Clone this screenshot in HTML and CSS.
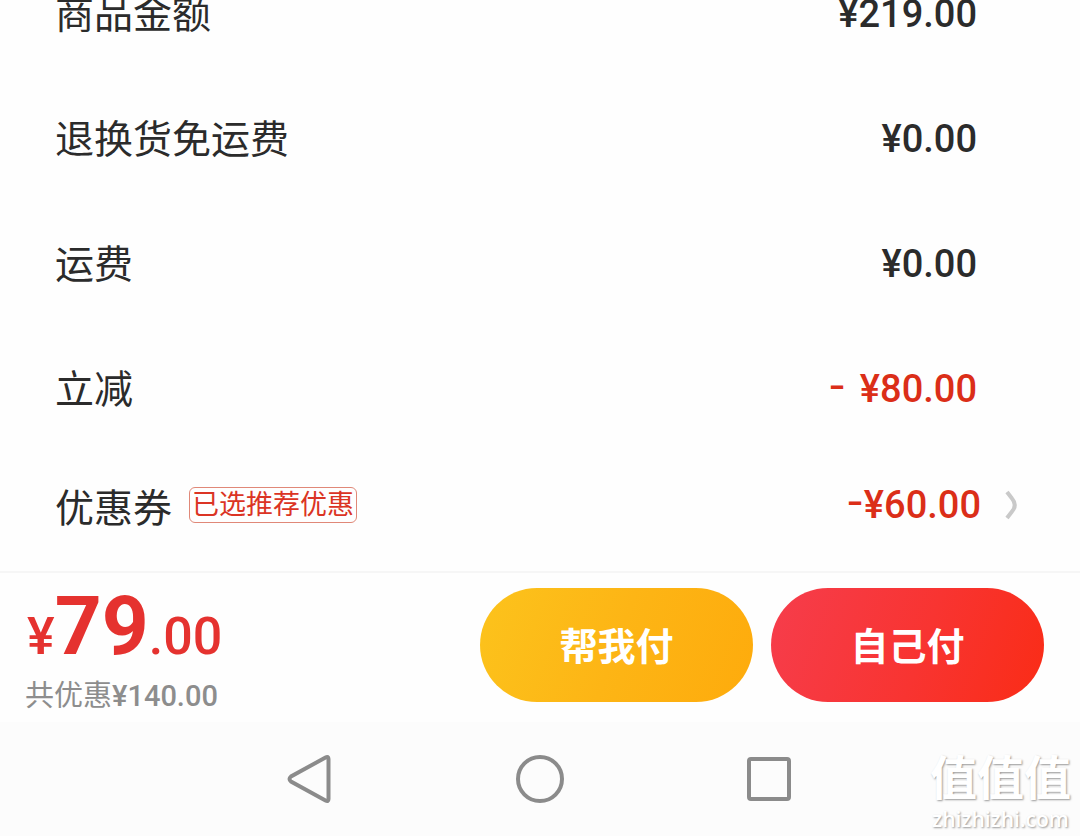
FILE: index.html
```html
<!DOCTYPE html>
<html lang="zh-CN">
<head>
<meta charset="utf-8">
<meta name="viewport" content="width=device-width, initial-scale=1">
<title>确认订单</title>
<link rel="stylesheet" href="styles.css">
</head>
<body>
<div class="page">
  <dl class="summary">
    <div class="row"><dt class="label">商品金额</dt><dd class="amount">¥219.00</dd></div>
    <div class="row"><dt class="label">退换货免运费</dt><dd class="amount">¥0.00</dd></div>
    <div class="row"><dt class="label">运费</dt><dd class="amount">¥0.00</dd></div>
    <div class="row"><dt class="label">立减</dt><dd class="amount discount"><span class="sign spaced">-</span>¥80.00</dd></div>
    <div class="row coupon">
      <dt class="label">优惠券<span class="tag">已选推荐优惠</span></dt>
      <dd class="amount discount"><span class="sign">-</span>¥60.00<svg class="chevron" viewBox="0 0 14 30" aria-hidden="true"><path d="M2 2 L7 8.500 Q12.500 15 7 21.500 L2 28"/></svg></dd>
    </div>
  </dl>
  <footer class="checkout">
    <div class="total">
      <p class="price">¥<strong class="price-main">79</strong>.00</p>
      <p class="saved">共优惠<span class="saved-amount">¥140.00</span></p>
    </div>
    <div class="actions">
      <button class="pay pay-friend" type="button">帮我付</button>
      <button class="pay pay-self" type="button">自己付</button>
    </div>
  </footer>
  <nav class="system-nav" aria-label="系统导航">
    <button class="nav-button" type="button" aria-label="返回"><svg class="nav-icon" viewBox="0 0 54 54"><path d="M41.500 5.500 Q44.500 4 44.500 7 V47 Q44.500 50 41.500 48.500 L7 29.500 Q4 27 7 24.500 Z"/></svg></button>
    <button class="nav-button" type="button" aria-label="主页"><svg class="nav-icon" viewBox="0 0 54 54"><circle cx="27" cy="27" r="22"/></svg></button>
    <button class="nav-button" type="button" aria-label="最近任务"><svg class="nav-icon" viewBox="0 0 54 54"><rect x="7" y="7" width="40" height="40" rx="2"/></svg></button>
  </nav>
  <div class="watermark"><span class="watermark-name">值值值</span><span class="watermark-site">zhizhizhi.com</span></div>
</div>
</body>
</html>
```
FILE: styles.css
```css
* { box-sizing: border-box; }

body {
  margin: 0;
  background: #fefefe;
  color: #2b2b2b;
  font-family: Roboto, "Noto Sans CJK SC", sans-serif;
}

.page {
  position: relative;
  min-height: 100vh;
  display: flex;
  flex-direction: column;
  overflow: hidden;
}

.summary {
  margin: -49px 0 0;
  padding: 0 103px 0 55px;
}

.row {
  display: flex;
  align-items: center;
  justify-content: space-between;
  height: 125px;
}

.label {
  display: flex;
  align-items: center;
  padding-bottom: 6px;
  font-family: "Noto Sans CJK SC", sans-serif;
  font-size: 39px;
  line-height: 40px;
}

.coupon { height: 120px; margin-right: -42px; padding-bottom: 12px; }
.coupon .label { padding-bottom: 0; }

.amount {
  display: flex;
  align-items: center;
  margin: 0;
  font-size: 38px;
  font-weight: 500;
  line-height: 40px;
}

.discount { color: #db2e18; }
.sign { padding-bottom: 8px; font-family: Inter, sans-serif; }
.spaced { margin-right: 14px; }

.tag {
  margin-left: 17px;
  padding: 0 2px 4px;
  border: 1px solid #e08878;
  border-radius: 6px;
  color: #db3424;
  font-size: 27px;
  line-height: 30px;
}

.chevron {
  width: 14px;
  height: 30px;
  margin-left: 24px;
  fill: none;
  stroke: #c9c9c9;
  stroke-width: 4;
}

.checkout {
  display: flex;
  align-items: center;
  justify-content: space-between;
  height: 151px;
  padding: 0 36px 6px 25px;
  border-top: 2px solid #f6f6f6;
}

.total { padding-top: 4px; }

.price {
  margin: 0;
  padding-left: 2px;
  color: #e5322f;
  font-size: 52px;
  font-weight: 500;
  line-height: 84px;
}

.price-main { font-size: 82px; font-weight: 700; }

.saved {
  margin: 0;
  color: #8d8d8d;
  font-family: "Noto Sans CJK SC", sans-serif;
  font-size: 29px;
  line-height: 28px;
}

.saved-amount { font-family: Roboto, sans-serif; font-weight: 500; }

.actions { display: flex; gap: 18px; }

.pay {
  width: 273px;
  height: 114px;
  padding: 0 0 2px;
  border: 0;
  border-radius: 57px;
  color: #fff;
  font-family: "Noto Sans CJK SC", sans-serif;
  font-size: 38px;
  font-weight: 700;
}

.pay-friend { background: linear-gradient(110deg, #fcc31c, #fdb515 50%, #feab0c); }
.pay-self { background: linear-gradient(110deg, #f63d4c, #f83431 55%, #fa2c16); }

.system-nav {
  flex: 1;
  display: flex;
  align-items: center;
  justify-content: center;
  gap: 175px;
  min-height: 113px;
  background: #fcfcfc;
}

.nav-button {
  display: flex;
  padding: 0;
  border: 0;
  background: none;
}

.nav-icon {
  width: 54px;
  height: 54px;
  fill: none;
  stroke: #8b8b8b;
  stroke-width: 4;
}

.watermark {
  position: absolute;
  right: 9px;
  bottom: 5px;
  display: flex;
  flex-direction: column;
  align-items: center;
  gap: 6px;
  color: #fff;
  text-shadow: 1px 1px 2px #999;
}

.watermark-name {
  font-family: "Noto Sans CJK SC", sans-serif;
  font-size: 47px;
  font-weight: 700;
  line-height: 52px;
}

.watermark-site {
  font-family: "Open Sans", sans-serif;
  font-size: 21px;
  font-weight: 600;
  line-height: 24px;
}
```
